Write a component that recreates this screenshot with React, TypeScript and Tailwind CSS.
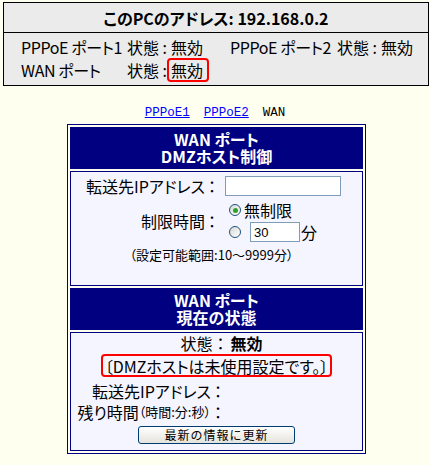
import React from "react";

function Radio({ checked }: { checked?: boolean }) {
  return (
    <span className="w-[12px] h-[12px] rounded-full border border-[#1c5180] bg-linear-to-br from-[#d8d8d2] to-white flex items-center justify-center shrink-0">
      {checked ? <span className="w-[5px] h-[5px] rounded-full bg-[#2ea12e]" /> : null}
    </span>
  );
}

function Colon() {
  return <span className="pl-[3px] pr-[2px]">：</span>;
}

export default function App() {
  return (
    <div className="w-[430px] h-[465px] overflow-hidden bg-[#fffff0] text-black font-['Noto_Sans_CJK_JP',sans-serif] [font-feature-settings:'palt']">
      {/* Top status box */}
      <div className="mt-[2px] ml-[3px] w-[426px] border border-black bg-[#ebebeb]">
        <div className="h-[30px] border-b border-black flex items-center justify-center text-[16px] font-bold leading-none">
          このPCのアドレス: 192.168.0.2
        </div>
        <div className="pt-[2px] pb-[3px] pl-[17px] text-[16px] leading-none grid grid-cols-[106px_44px_59px_107px_44px_auto]">
          <div className="h-[23px] flex items-center tracking-[-0.4px]">PPPoE ポート1</div>
          <div className="h-[23px] flex items-center">状態 :</div>
          <div className="h-[23px] flex items-center">無効</div>
          <div className="h-[23px] flex items-center tracking-[-0.4px]">PPPoE ポート2</div>
          <div className="h-[23px] flex items-center">状態 :</div>
          <div className="h-[23px] flex items-center">無効</div>
          <div className="h-[24px] flex items-center tracking-[-0.4px]">WAN ポート</div>
          <div className="h-[24px] flex items-center">状態 :</div>
          <div className="h-[24px] flex items-center">
            <span className="-ml-[4px] h-[24px] pl-[2px] pr-[4px] border-2 border-[#ff0000] rounded-[4px] flex items-center">
              無効
            </span>
          </div>
          <div />
          <div />
          <div />
        </div>
      </div>

      {/* Links */}
      <div className="mt-[18px] h-[18px] flex items-center justify-center gap-[14px] font-['Liberation_Mono',monospace] text-[12.5px] leading-none">
        <a className="text-[#0000ff] underline">PPPoE1</a>
        <a className="text-[#0000ff] underline">PPPoE2</a>
        <span>WAN</span>
      </div>

      {/* Main table */}
      <div className="mt-[2px] ml-[67px] w-[299px] border border-[#000080] p-[2px] flex flex-col gap-[2px]">
        <div className="h-[42px] bg-[#000080] border border-[#000080] flex flex-col items-center justify-center text-white font-bold text-[16px] leading-[17px]">
          <div>WAN ポート</div>
          <div>DMZホスト制御</div>
        </div>

        <div className="h-[115px] border border-[#000080] bg-[#f5f5ff] pt-[4px] text-[16px] leading-none">
          <div className="grid grid-cols-[147px_auto] gap-x-[7px]">
            <div className="h-[20px] flex items-center justify-end">
              転送先IPアドレス<Colon />
            </div>
            <div className="h-[20px] flex items-center">
              <span className="w-[116px] h-[20px] border border-[#7f9db9] bg-white" />
            </div>
            <div className="mt-[3px] flex items-center justify-end">
              制限時間<Colon />
            </div>
            <div className="mt-[3px] flex flex-col">
              <div className="h-[22px] flex items-center">
                <span className="ml-[4px]">
                  <Radio checked />
                </span>
                <span className="ml-[3px]">無制限</span>
              </div>
              <div className="h-[22px] flex items-center">
                <span className="ml-[4px]">
                  <Radio />
                </span>
                <span className="ml-[9px] w-[50px] h-[20px] border border-[#7f9db9] bg-white flex items-center pl-[3px] text-[13px] font-['Liberation_Sans',sans-serif]">
                  30
                </span>
                <span className="ml-[1px]">分</span>
              </div>
            </div>
          </div>
          <div className="mt-[1px] h-[20px] flex items-center justify-center pr-[10px] text-[13px]">
            （設定可能範囲:10〜9999分）
          </div>
        </div>

        <div className="h-[42px] bg-[#000080] border border-[#000080] flex flex-col items-center justify-center text-white font-bold text-[16px] leading-[17px]">
          <div>WAN ポート</div>
          <div>現在の状態</div>
        </div>

        <div className="h-[119px] border border-[#000080] bg-[#f5f5ff] text-[16px] leading-none flex flex-col">
          <div className="h-[20px] flex items-center justify-center pl-[10px]">
            状態<span className="[font-feature-settings:normal]">：</span>
            <span className="font-bold ml-[2px]">無効</span>
          </div>
          <div className="mt-[1px] flex justify-center">
            <span className="h-[23px] px-[2px] border-2 border-[#ff0000] rounded-[4px] flex items-center">
              〔DMZホストは未使用設定です。〕
            </span>
          </div>
          <div className="mt-[3px] grid grid-cols-[153px_auto]">
            <div className="h-[21px] flex items-center justify-end">
              転送先IPアドレス<Colon />
            </div>
            <div />
            <div className="h-[21px] flex items-center justify-end">
              残り時間<span className="text-[13px]">（時間:分:秒）</span>
              <Colon />
            </div>
            <div />
          </div>
          <div className="mt-[4px] flex justify-center">
            <button className="w-[157px] h-[18px] border border-[#003c74] rounded-[3px] bg-linear-to-b from-white to-[#e4e3dc] text-[12px] leading-none flex items-center justify-center [font-feature-settings:normal] tracking-[1px]">
              最新の情報に更新
            </button>
          </div>
        </div>
      </div>
    </div>
  );
}
